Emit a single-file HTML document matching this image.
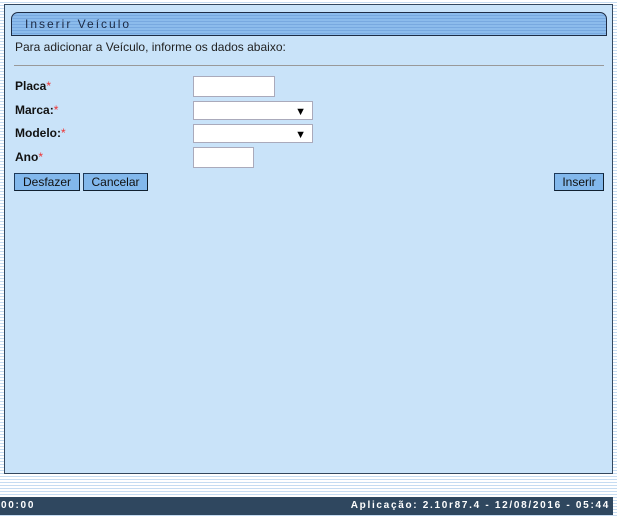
<!DOCTYPE html>
<html><head><style>
body{margin:0;width:617px;height:518px;overflow:hidden;position:relative;font-family:"Liberation Sans",Arial,sans-serif;font-size:12px;
background:repeating-linear-gradient(#fff 0,#fff 2px,#c6dcf2 2px,#c6dcf2 3px);}
.panel{position:absolute;left:4px;top:4px;width:607px;height:468px;background:#c9e3f9;border:1px solid #33475e;}
.title{position:absolute;left:6px;top:7px;width:594px;height:22px;border:1px solid #1e2d45;border-radius:7px 7px 0 0;
background:repeating-linear-gradient(#8cbcec 0,#8cbcec 2px,#78a9e0 2px,#78a9e0 3px);}
.title span{position:absolute;left:13px;top:4px;font-size:12px;letter-spacing:2px;color:#1c2a44;}
.intro{position:absolute;left:10px;top:35px;color:#222;font-size:12px;}
.hr{position:absolute;left:9px;top:60px;width:590px;height:1px;background:#999;}
.lbl{position:absolute;left:10px;font-weight:bold;color:#111;}
.lbl i{color:#e33;font-style:normal;font-weight:normal;}
.in{position:absolute;background:#fff;border:1px solid #aab;box-sizing:border-box;}
.sel:after{content:"▼";position:absolute;right:6px;top:4px;font-size:11px;}
.btn{position:absolute;top:168px;height:18px;box-sizing:border-box;border:1px solid #1e3a5a;border-right-color:#102030;border-bottom-color:#102030;background:#82b8ec;font-size:12px;color:#111;text-align:center;line-height:16px;}
.foot{position:absolute;left:0;top:497px;width:613px;height:18px;background:#2f475f;color:#fff;font-weight:bold;font-size:10px;letter-spacing:1.7px;line-height:18px;}
</style></head><body>
<div class="panel">
<div class="title"><span>Inserir Veículo</span></div>
<div class="intro">Para adicionar a Veículo, informe os dados abaixo:</div>
<div class="hr"></div>
<div class="lbl" style="top:74px">Placa<i>*</i></div>
<div class="lbl" style="top:98px">Marca:<i>*</i></div>
<div class="lbl" style="top:121px">Modelo:<i>*</i></div>
<div class="lbl" style="top:145px">Ano<i>*</i></div>
<div class="in" style="left:188px;top:71px;width:82px;height:21px"></div>
<div class="in sel" style="left:188px;top:96px;width:120px;height:19px"></div>
<div class="in sel" style="left:188px;top:119px;width:120px;height:19px"></div>
<div class="in" style="left:188px;top:142px;width:61px;height:21px"></div>
<div class="btn" style="left:9px;width:66px">Desfazer</div>
<div class="btn" style="left:78px;width:65px">Cancelar</div>
<div class="btn" style="left:549px;width:50px">Inserir</div>
</div>
<div class="foot"><span style="position:absolute;left:1px">00:00</span><span style="position:absolute;right:3px">Aplicação: 2.10r87.4 - 12/08/2016 - 05:44</span></div>
</body></html>
